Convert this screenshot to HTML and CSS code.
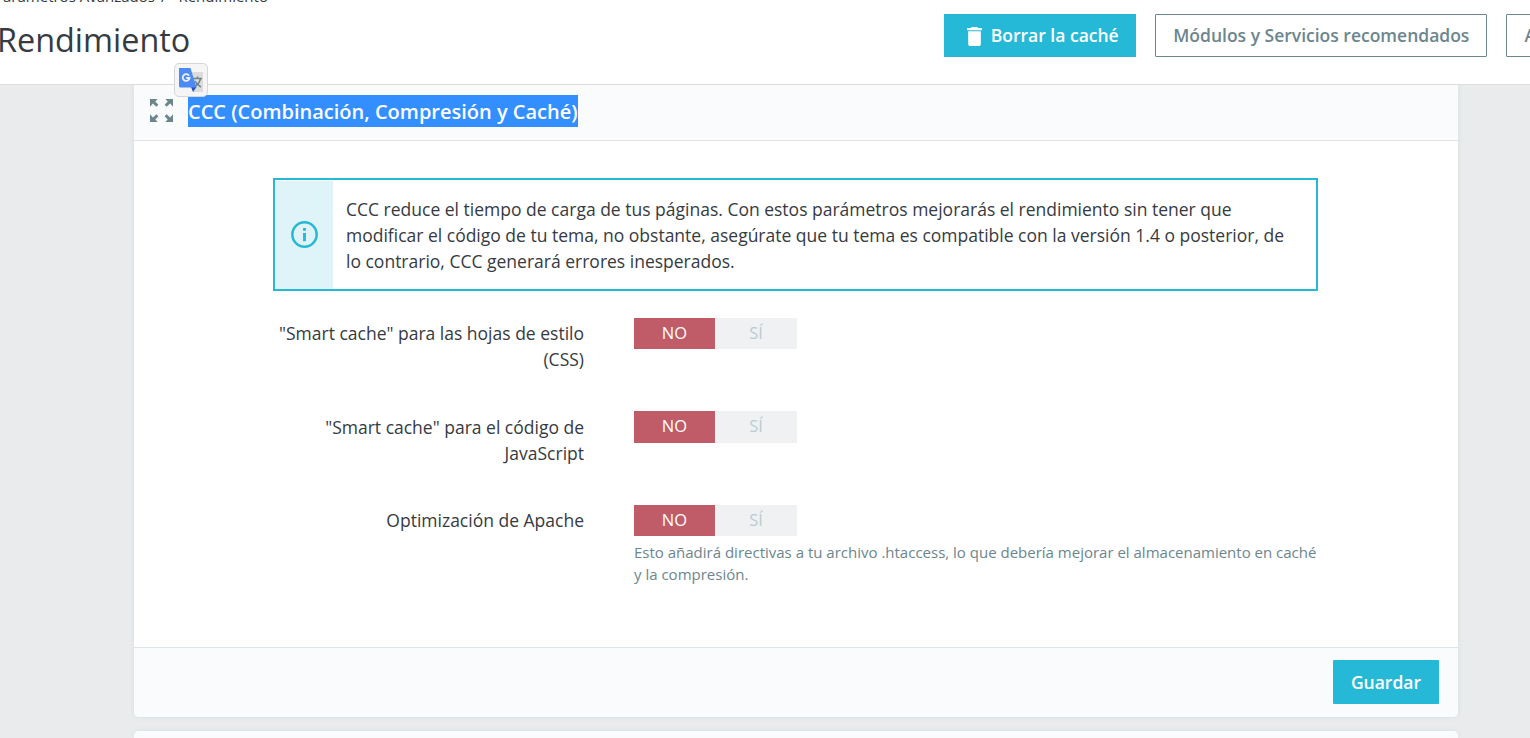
FILE: index.html
```
<!DOCTYPE html>
<html lang="es">
<head>
    <meta charset="UTF-8">
    <meta name="viewport" content="width=device-width, initial-scale=1.0">
    <title>Rendimiento</title>
    <link rel="stylesheet" href="styles.css">
</head>
<body>
    <header class="page-header">
        <div class="page-heading">
            <nav class="breadcrumb">
                <span>Parámetros Avanzados</span>
                <span class="separator">/</span>
                <span>Rendimiento</span>
            </nav>
            <h1>Rendimiento</h1>
        </div>
        <div class="toolbar">
            <a class="btn btn-primary btn-icon" href="#">
                <svg class="icon-trash" viewBox="0 0 14 18" fill="currentColor">
                    <path d="M1 16c0 1.100.9 2 2 2h8c1.100 0 2-.9 2-2V4H1v12zM14 1h-3.500l-1-1h-5l-1 1H0v2h14V1z"/>
                </svg>
                <span>Borrar la caché</span>
            </a>
            <a class="btn btn-outline" href="#">Módulos y Servicios recomendados</a>
            <a class="btn btn-outline" href="#">Ayuda</a>
        </div>
    </header>

    <main class="content">
        <section class="card">
            <div class="card-header">
                <svg class="icon-expand" viewBox="0 0 24 24" fill="currentColor">
                    <path d="M0 0h8L5.500 2.500 8.700 6 6.700 8 3 4.600 0 8z"/>
                    <path d="M24 0h-8l2.500 2.500L15.300 6l2 2L21 4.600 24 8z"/>
                    <path d="M0 24h8l-2.500-2.500L8.700 18l-2-2L3 19.400 0 16z"/>
                    <path d="M24 24h-8l2.500-2.500-3.200-3.500 2-2 3.700 3.400L24 16z"/>
                </svg>
                <h3><span class="selected">CCC (Combinación, Compresión y Caché)</span></h3>
            </div>

            <div class="card-body">
                <div class="alert">
                    <div class="alert-icon">
                        <svg viewBox="0 0 26 26" fill="none" stroke="currentColor" stroke-width="2.400">
                            <circle cx="13" cy="13" r="11.700"/>
                            <path d="M13 11.500v8M13 6.800v2.600" stroke-width="2.800"/>
                        </svg>
                    </div>
                    <p>CCC reduce el tiempo de carga de tus páginas. Con estos parámetros mejorarás el rendimiento sin tener que modificar el código de tu tema, no obstante, asegúrate que tu tema es compatible con la versión 1.4 o posterior, de lo contrario, CCC generará errores inesperados.</p>
                </div>

                <div class="form-row">
                    <label>"Smart cache" para las hojas de estilo (CSS)</label>
                    <div class="field">
                        <div class="switch"><span class="active">NO</span><span>SÍ</span></div>
                    </div>
                </div>
                <div class="form-row">
                    <label>"Smart cache" para el código de JavaScript</label>
                    <div class="field">
                        <div class="switch"><span class="active">NO</span><span>SÍ</span></div>
                    </div>
                </div>
                <div class="form-row">
                    <label>Optimización de Apache</label>
                    <div class="field">
                        <div class="switch"><span class="active">NO</span><span>SÍ</span></div>
                        <small>Esto añadirá directivas a tu archivo .htaccess, lo que debería mejorar el almacenamiento en caché y la compresión.</small>
                    </div>
                </div>
            </div>

            <div class="card-footer">
                <button class="btn btn-primary btn-save">Guardar</button>
            </div>
        </section>

        <section class="card card-next">
            <div class="card-header"></div>
        </section>

        <!-- translate bubble over the selected title -->
        <div class="translate-bubble">
            <svg viewBox="0 0 26 26">
                <path d="M8 4h16v20H14z" fill="#dcdcdc"/>
                <path d="M14 10.500h9M18.500 8.500v2M21.500 10.500c-.7 3.500-3.200 6.500-6 8M16 13c1.200 2.600 3.300 4.500 6 6" fill="none" stroke="#71858c" stroke-width="1.600"/>
                <path d="M12 19h5.500L14 24z" fill="#2a4fb8"/>
                <path d="M0 0h11.500l6 19.500H1.500A1.500 1.500 0 0 1 0 18z" fill="#4c8bf5"/>
                <path d="M10 7.700A3.400 3.400 0 1 0 10.500 10H7.200" fill="none" stroke="#e8f0fe" stroke-width="1.800"/>
            </svg>
        </div>
    </main>
</body>
</html>
```

FILE: styles.css
```
* {
    box-sizing: border-box;
}

body {
    margin: 0;
    height: 738px;
    overflow: hidden;
    background-color: #eaebec;
    color: #363a41;
    font-family: "Open Sans", sans-serif;
    font-size: 17.5px;
    line-height: 26px;
}

h1, h3, p {
    margin: 0;
}

.page-header {
    display: flex;
    justify-content: space-between;
    height: 85px;
    background-color: #fff;
    border-bottom: 1px solid #dddddd;
}

.page-heading {
    margin-left: -3px;
}

.breadcrumb {
    display: flex;
    height: 20px;
    margin: -14px 0 12px -3px;
    font-size: 15px;
    line-height: 20px;
    white-space: nowrap;
}

.breadcrumb .separator {
    margin: 0 12px 0 6px;
}

h1 {
    font-size: 32.4px;
    font-weight: 400;
    line-height: 42px;
}

.toolbar {
    display: flex;
    gap: 19px;
    align-items: flex-start;
    margin-right: -65px;
    padding-top: 14px;
}

.btn {
    display: flex;
    align-items: center;
    height: 43px;
    padding: 0 16.5px 2px 17.5px;
    border: 1px solid transparent;
    font-family: inherit;
    font-size: 17.5px;
    font-weight: 600;
    line-height: 26px;
    text-decoration: none;
    white-space: nowrap;
}

.btn-primary {
    background-color: #25b9d7;
    color: #fff;
}

.btn-outline {
    border-color: #6c868e;
    border-radius: 1px;
    color: #6c868e;
}

.btn-icon {
    gap: 8.5px;
    padding-left: 22px;
    padding-right: 16px;
}

.icon-trash {
    width: 15px;
    height: 19px;
    margin-top: 3px;
}

.content {
    position: relative;
    width: 1324px;
    margin-left: 134px;
}

.card {
    background-color: #fff;
    border-radius: 0 0 5px 5px;
    box-shadow: 0 0 5px #d3dfe2;
    clip-path: inset(0 -10px -10px -10px);
}

.card-header {
    display: flex;
    align-items: center;
    height: 56px;
    padding-left: 16px;
    background-color: #fafbfc;
    border-bottom: 1px solid #dbe6e9;
}

.icon-expand {
    width: 23px;
    height: 23px;
    margin: -4px 15px 0 0;
    color: #6c868e;
}

h3 {
    font-size: 20px;
    font-weight: 600;
    line-height: 34px;
}

.selected {
    display: block;
    height: 32px;
    margin-top: -3px;
    background-color: #338fff;
    color: #fff;
}

.translate-bubble {
    position: absolute;
    top: -22px;
    left: 40px;
    width: 34px;
    height: 34px;
    padding: 4px;
    background-color: #f5f5f5;
    border: 1px solid #d6d6d6;
    border-radius: 5px;
}

.translate-bubble svg {
    display: block;
    width: 26px;
    height: 26px;
}

.card-body {
    height: 506px;
    padding: 37px 140px 0 139px;
}

.alert {
    display: flex;
    height: 113px;
    margin-bottom: 27px;
    border: 2px solid #25b9d7;
}

.alert-icon {
    display: flex;
    flex: 0 0 57px;
    align-items: center;
    justify-content: center;
    margin: 1px 13px 0 1px;
    padding-bottom: 1px;
    background-color: #dff4f9;
    color: #25b9d7;
}

.alert-icon svg {
    width: 27px;
    height: 27px;
}

.alert p {
    padding: 16px 24px 0 0;
}

.form-row {
    display: flex;
    min-height: 93.4px;
}

.form-row label {
    width: 311px;
    padding-top: 2.2px;
    text-align: right;
}

.field {
    flex: 1;
    margin-left: 50px;
}

.switch {
    display: flex;
    width: 163px;
    height: 31.25px;
    font-size: 16.5px;
    line-height: 30.4px;
    text-align: center;
    background-color: #eff1f2;
}

.switch span {
    flex: 1;
    color: #bbcdd2;
}

.switch .active {
    flex: 0 0 81px;
    background-color: #c05c67;
    color: #fff;
}

.field small {
    display: block;
    margin-right: -4px;
    padding-top: 5px;
    color: #6c868e;
    font-size: 15px;
    line-height: 22px;
}

.card-footer {
    display: flex;
    justify-content: flex-end;
    height: 70px;
    padding: 12px 19px 0;
    background-color: #fafbfc;
    border-top: 1px solid #dbe6e9;
    border-radius: 0 0 5px 5px;
}

.btn-save {
    height: 44px;
    padding: 0 17px;
    border-radius: 1px;
}

.card-next {
    height: 7px;
    margin-top: 14px;
    border-radius: 5px 5px 0 0;
    clip-path: none;
}

.card-next .card-header {
    height: 7px;
    border-bottom: none;
    border-radius: 5px 5px 0 0;
}
```
